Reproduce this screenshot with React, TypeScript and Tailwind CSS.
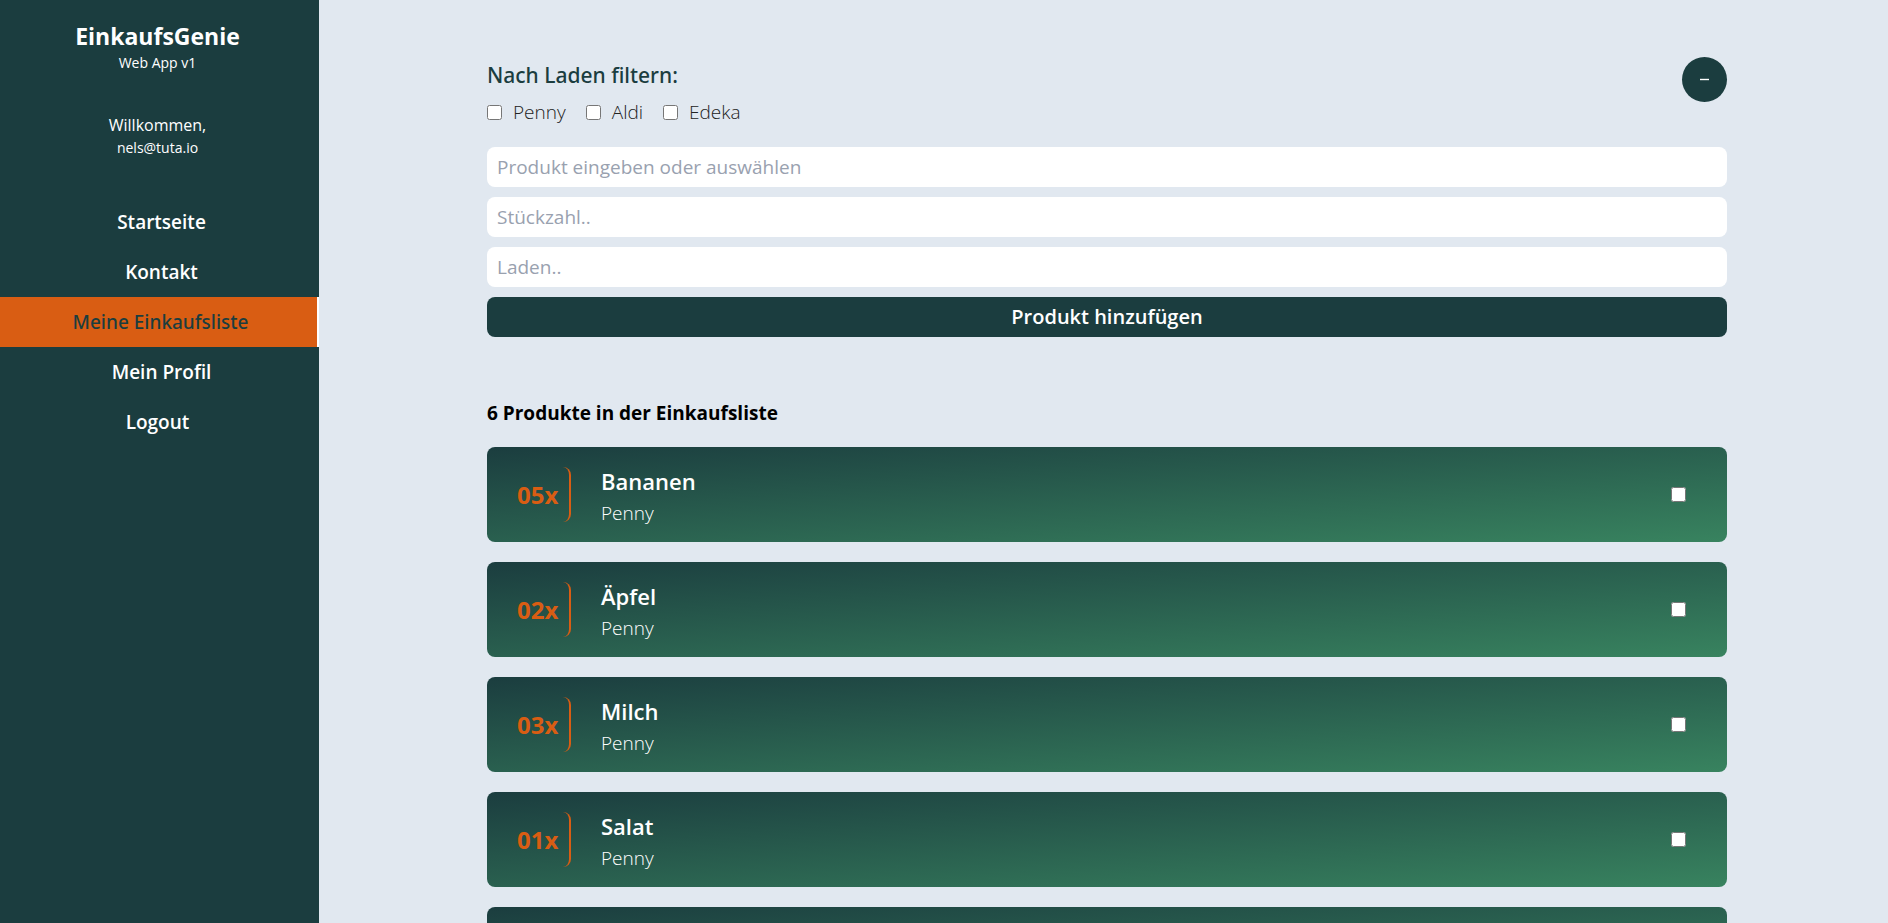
import { useState } from "react";

type Product = { id: number; amount: string; name: string; store: string };

const stores = ["Penny", "Aldi", "Edeka"];

const products: Product[] = [
  { id: 1, amount: "05", name: "Bananen", store: "Penny" },
  { id: 2, amount: "02", name: "Äpfel", store: "Penny" },
  { id: 3, amount: "03", name: "Milch", store: "Penny" },
  { id: 4, amount: "01", name: "Salat", store: "Penny" },
  { id: 5, amount: "01", name: "Brot", store: "Aldi" },
  { id: 6, amount: "02", name: "Joghurt", store: "Edeka" },
];

const links = ["Startseite", "Kontakt", "Meine Einkaufsliste", "Mein Profil"];
const activeLink = "Meine Einkaufsliste";

function Sidebar() {
  return (
    <aside className="w-[319px] shrink-0 bg-[#1b3d3f] text-center text-white">
      <header className="pt-5 pr-1">
        <h1 className="text-[23px] leading-8 font-bold">EinkaufsGenie</h1>
        <p className="text-sm leading-[21px]">Web App v1</p>
      </header>
      <div className="pt-10 pr-1">
        <p className="text-base leading-6">Willkommen,</p>
        <p className="text-sm leading-[21px]">nels@tuta.io</p>
      </div>
      <nav className="pt-[39px] text-[19px] leading-[50px] font-semibold">
        {links.map((link) =>
          link === activeLink ? (
            <a
              key={link}
              href="#"
              aria-current="page"
              className="block border-r-2 border-white bg-[#d95d13] pl-1 font-['Noto_Sans','Open_Sans',sans-serif] font-medium text-[#1b3d3f]"
            >
              {link}
            </a>
          ) : (
            <a key={link} href="#" className="block pl-1">
              {link}
            </a>
          ),
        )}
        <button type="button" className="block w-full pr-1">
          Logout
        </button>
      </nav>
    </aside>
  );
}

function StoreFilter() {
  return (
    <fieldset>
      <legend className="font-['Noto_Sans','Open_Sans',sans-serif] text-[21px] leading-9 font-medium text-[#1b3d3f]">
        Nach Laden filtern:
      </legend>
      <div className="flex h-[38px] items-center gap-5">
        {stores.map((store) => (
          <label key={store} className="flex items-center gap-[11px] text-[19px] font-light text-[#222]">
            <input type="checkbox" className="size-[15px]" />
            {store}
          </label>
        ))}
      </div>
    </fieldset>
  );
}

function ProductForm() {
  const field =
    "h-10 w-full rounded-lg bg-white px-2.5 text-[19px] text-gray-700 placeholder:text-gray-400";
  return (
    <form className="flex flex-col gap-2.5 pt-4" onSubmit={(e) => e.preventDefault()}>
      <input className={field} aria-label="Produkt" placeholder="Produkt eingeben oder auswählen" />
      <input className={field} aria-label="Stückzahl" placeholder="Stückzahl.." />
      <input className={field} aria-label="Laden" placeholder="Laden.." />
      <button type="submit" className="h-10 rounded-lg bg-[#1b3d3f] text-xl font-semibold text-white">
        Produkt hinzufügen
      </button>
    </form>
  );
}

function ProductCard({ product }: { product: Product }) {
  return (
    <li className="flex h-[95px] items-center rounded-lg bg-linear-to-br/srgb from-[#1b3d3f] to-[#38835f] pr-[41px] pl-[30px] text-white">
      <span className="flex h-[55px] w-[54px] items-center rounded-r-lg border-r-2 border-[#d95d13] text-2xl font-bold text-[#d95d13]">
        {product.amount}x
      </span>
      <div className="flex-1 pt-1 pl-[30px]">
        <h3 className="text-[22px] leading-8 font-semibold">{product.name}</h3>
        <p className="text-[19px] leading-8 font-light">{product.store}</p>
      </div>
      <input type="checkbox" aria-label={product.name} className="size-[15px]" />
    </li>
  );
}

export default function App() {
  const [formOpen, setFormOpen] = useState(true);
  return (
    <div className="flex h-screen bg-[#e1e8f0] font-['Open_Sans','Noto_Sans',sans-serif]">
      <Sidebar />
      <main className="min-w-0 flex-1 overflow-y-auto pt-[57px] pr-[161px] pb-10 pl-[168px] [scrollbar-width:none]">
        <div className="flex items-start justify-between">
          <StoreFilter />
          <button
            type="button"
            aria-label="Formular umschalten"
            aria-expanded={formOpen}
            onClick={() => setFormOpen(!formOpen)}
            className="flex size-[45px] items-center justify-center rounded-full bg-[#1b3d3f] text-white"
          >
            <svg width="9" height="9" viewBox="0 0 9 9" aria-hidden="true">
              <path d="M0 4.5h9" stroke="currentColor" strokeWidth="1.4" />
            </svg>
          </button>
        </div>
        {formOpen && <ProductForm />}
        <h2 className="pt-[60px] text-[19px] leading-8 font-bold text-black">
          {products.length} Produkte in der Einkaufsliste
        </h2>
        <ul className="flex flex-col gap-5 pt-[18px]">
          {products.map((product) => (
            <ProductCard key={product.id} product={product} />
          ))}
        </ul>
      </main>
    </div>
  );
}
